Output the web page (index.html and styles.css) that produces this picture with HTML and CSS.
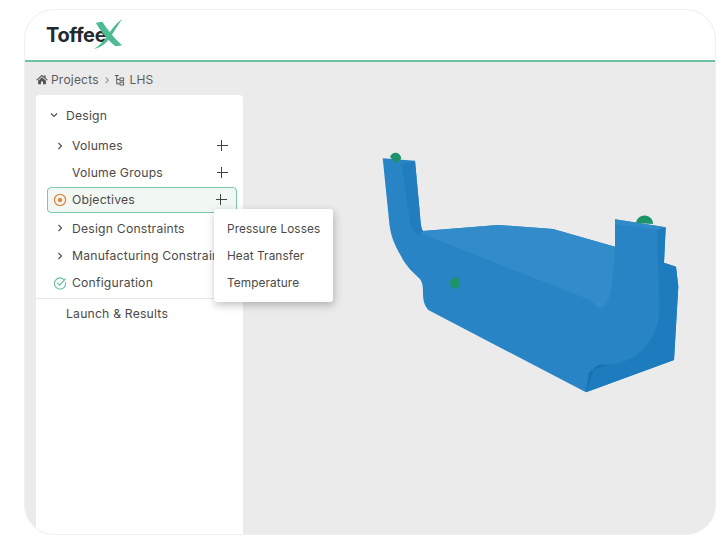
FILE: index.html
```html
<html>

<head>
    <meta http-equiv="Content-Type" content="text/html" charset="utf-8">
    <title>ToffeeX - LHS</title>
    <link rel="stylesheet" href="styles.css">
</head>

<body>
    <div class="window">
        <div class="topbar">
            <div class="logo">
                <span class="logo-text">Toffee</span>
                <svg class="logo-x" viewBox="0 0 34 34">
                    <path d="M3 5 L10 4 C15 12 23 22 31 29 L24 30 C16 24 8 14 3 5 Z" fill="#4dbb94" />
                    <path d="M31 1 C24 6 19 13 15 19 C11 25 7 29 1 33 C9 31 14 27 18 21 C22 15 26 8 31 1 Z" fill="#4dbb94" />
                </svg>
            </div>
        </div>

        <div class="crumbs">
            <svg class="crumb-icon" viewBox="0 0 14 12">
                <path d="M7 0.5 L0.3 6.4 L1.2 7.3 L7 2.3 L12.8 7.3 L13.7 6.4 L11.2 4.2 V1 H9.6 V2.8 Z M2.4 7.4 V11.6 H5.8 V8.4 H8.2 V11.6 H11.6 V7.4 L7 3.5 Z" fill="#555" />
            </svg>
            <span>Projects</span>
            <span class="crumb-sep">›</span>
            <svg class="crumb-icon tree" viewBox="0 0 12 12">
                <path d="M1 1 H5 M3 1 V10 H6 M3 5.5 H6" fill="none" stroke="#555" stroke-width="1.1" />
                <rect x="6.5" y="3.8" width="4" height="3" fill="none" stroke="#555" />
                <rect x="6.5" y="8.4" width="4" height="3" fill="none" stroke="#555" />
            </svg>
            <span>LHS</span>
        </div>

        <div class="content">
            <div class="sidebar">
                <div class="row row-top">
                    <svg class="chev" viewBox="0 0 8 8"><path d="M1 2.5 L4 5.5 L7 2.5" /></svg>
                    <span>Design</span>
                </div>
                <div class="row">
                    <svg class="chev" viewBox="0 0 8 8"><path d="M2.5 1 L5.5 4 L2.5 7" /></svg>
                    <span>Volumes</span>
                    <span class="plus"></span>
                </div>
                <div class="row">
                    <span class="blank"></span>
                    <span>Volume Groups</span>
                    <span class="plus"></span>
                </div>
                <div class="row row-active">
                    <svg class="status" viewBox="0 0 14 14">
                        <circle cx="7" cy="7" r="5.6" fill="none" stroke="#e8843f" stroke-width="1.3" />
                        <circle cx="7" cy="7" r="2.2" fill="#e8843f" />
                    </svg>
                    <span>Objectives</span>
                    <span class="plus"></span>
                </div>
                <div class="row row-gap">
                    <svg class="chev" viewBox="0 0 8 8"><path d="M2.5 1 L5.5 4 L2.5 7" /></svg>
                    <span>Design Constraints</span>
                </div>
                <div class="row">
                    <svg class="chev" viewBox="0 0 8 8"><path d="M2.5 1 L5.5 4 L2.5 7" /></svg>
                    <span class="cut">Manufacturing Constraints</span>
                </div>
                <div class="row">
                    <svg class="status" viewBox="0 0 14 14">
                        <path d="M11.6 4.2 A5.6 5.6 0 1 0 12.5 6.2" fill="none" stroke="#63c09c" stroke-width="1.1" />
                        <path d="M4.3 6.8 L6.6 9.2 L12.6 2.6" fill="none" stroke="#63c09c" stroke-width="1.2" />
                    </svg>
                    <span>Configuration</span>
                </div>
                <div class="launch">Launch &amp; Results</div>

                <div class="menu">
                    <div class="menu-item">Pressure Losses</div>
                    <div class="menu-item">Heat Transfer</div>
                    <div class="menu-item">Temperature</div>
                </div>
            </div>

            <div class="viewport">
                <!-- part drawn in page coordinates -->
                <svg class="model" viewBox="243 95 473 440">
                    <path d="M382.7 158.3 L415 160.7 L420 215 C420.5 224 421.5 229 423 231 L498 225 L553 229 L615 246.7 L615 219.3 L665.7 227.3 L664 262.7 L676 266.7 L678.3 286.7 L674 360 L586 392.3 L428.3 310 C424 305 423 300 423 292 C423 285 422 281 419 278 C410 270 405 264 401 256 C394 244 391 236 389.5 225 Z" fill="#2884c5" />
                    <path d="M423 231 L498 225 L553 229 L615 246.7 L613 275 C611 300 605 309 600 308 C596 307 594 303 590 300 L420 233 Z" fill="#328cc9" />
                    <path d="M401.5 164 L415 160.7 L420 215 C420.5 224 421.5 229 423 231 L418 236 C413 232 410 225 409 215 Z" fill="#227dbf" />
                    <path d="M657 230 L665.7 227.3 L664 262.7 L676 266.7 L678.3 286.7 L674 360 L586 392.3 L593 370 L594 368 C598 364 603 365 610 364 C632 362 650 350 658 322 C661 305 658 280 657 230 Z" fill="#1c7cbe" />
                    <path d="M615 219.3 L665.7 227.3 L657 230 L615 224 Z" fill="#318bc8" />
                    <path d="M586 392.3 L593 372 L594 368 C598 364 602 364 606 365 L589 372 Z" fill="#1a70b0" />
                    <path d="M390 157 A5.6 5.6 0 0 1 401 159 L396 163 Z" fill="#1a9468" />
                    <path d="M636 223 A8.5 8 0 0 1 653 224 Z" fill="#1a9468" />
                    <ellipse cx="455" cy="283" rx="5" ry="5.8" fill="#1a9468" />
                </svg>
            </div>
        </div>
    </div>
</body>

</html>
```

FILE: styles.css
```css
body {
    margin: 0;
    width: 724px;
    height: 552px;
    background-color: white;
    font-family: Inter, 'Liberation Sans', sans-serif;
    color: #4a4a4a;
    overflow: hidden;
}

.window {
    display: flex;
    flex-direction: column;
    width: 692px;
    height: 526px;
    box-sizing: border-box;
    margin: 9px 0 0 24px;
    background-color: #ebebeb;
    border: 1px solid #f0f0f0;
    border-radius: 30px;
    overflow: hidden;
}

.topbar {
    flex: none;
    height: 50px;
    background-color: white;
    border-bottom: 2px solid #6cc3a2;
    padding-left: 21px;
    display: flex;
    align-items: center;
}

.logo {
    display: flex;
    align-items: center;
    height: 34px;
}

.logo-text {
    font-size: 20px;
    font-weight: 700;
    color: #1f2b30;
    letter-spacing: -0.4px;
}

.logo-x {
    width: 32px;
    height: 32px;
    margin-left: -13px;
    margin-top: -3px;
}

.crumbs {
    flex: none;
    height: 33px;
    box-sizing: border-box;
    padding: 2px 0 0 11px;
    display: flex;
    align-items: center;
    gap: 3px;
    font-size: 12px;
    color: #5c5c5c;
    letter-spacing: 0.2px;
}

.crumb-icon {
    width: 12px;
    height: 11px;
}

.crumb-icon.tree {
    width: 11px;
    height: 12px;
    margin-right: 2px;
}

.crumb-sep {
    margin: 0 1px 0 3px;
    color: #888;
}

.content {
    flex: 1;
    display: flex;
    min-height: 0;
    padding-left: 11px;
}

.sidebar {
    position: relative;
    flex: none;
    width: 207px;
    background-color: white;
    border-radius: 4px 4px 0 0;
    padding: 6px 6px 0 11px;
    box-sizing: border-box;
    font-size: 12.2px;
    letter-spacing: 0.2px;
}

.row {
    display: flex;
    align-items: center;
    height: 27.3px;
    gap: 8px;
    padding: 0 9px 0 0;
    white-space: nowrap;
    position: relative;
}

.row-top {
    height: 28px;
    margin: 0 0 3px 3px;
    gap: 8px;
}

.row-active {
    height: 26px;
    margin-left: 0;
    background-color: #f1f8f4;
    border: 1px solid #7cc7aa;
    border-radius: 4px;
    box-sizing: border-box;
}

.row-active .status {
    margin-left: 5px;
}

.row-gap {
    margin-top: 2px;
}

.chev {
    flex: none;
    width: 8px;
    height: 8px;
    margin-left: 9px;
    fill: none;
    stroke: #4a4a4a;
    stroke-width: 1.1;
}

.row-top .chev {
    margin-left: 0;
}

.blank {
    flex: none;
    width: 8px;
    margin-left: 9px;
}

.status {
    flex: none;
    width: 14px;
    height: 14px;
    margin-left: 6px;
    margin-right: -3px;
}

.plus {
    position: absolute;
    right: 9.5px;
    top: 50%;
    width: 11px;
    height: 11px;
    margin-top: -5.5px;
    background:
        linear-gradient(#444, #444) center / 100% 1.4px no-repeat,
        linear-gradient(#444, #444) center / 1.4px 100% no-repeat;
}

.launch {
    margin: 2px -6px 0 -11px;
    padding: 7px 0 0 30px;
    border-top: 1px solid #e6e6e6;
    height: 22px;
}

.menu {
    position: absolute;
    left: 178px;
    top: 114px;
    width: 119px;
    height: 93px;
    box-sizing: border-box;
    padding: 7px 0 0 13px;
    background-color: white;
    border-radius: 3px;
    box-shadow: 1px 3px 9px rgba(0, 0, 0, 0.25);
    z-index: 2;
    font-size: 11.8px;
    letter-spacing: 0.1px;
}

.menu-item {
    height: 26.8px;
    line-height: 27px;
}

.viewport {
    flex: 1;
    position: relative;
}

.model {
    display: block;
    width: 473px;
    height: 440px;
    filter: blur(0.5px);
}
```
